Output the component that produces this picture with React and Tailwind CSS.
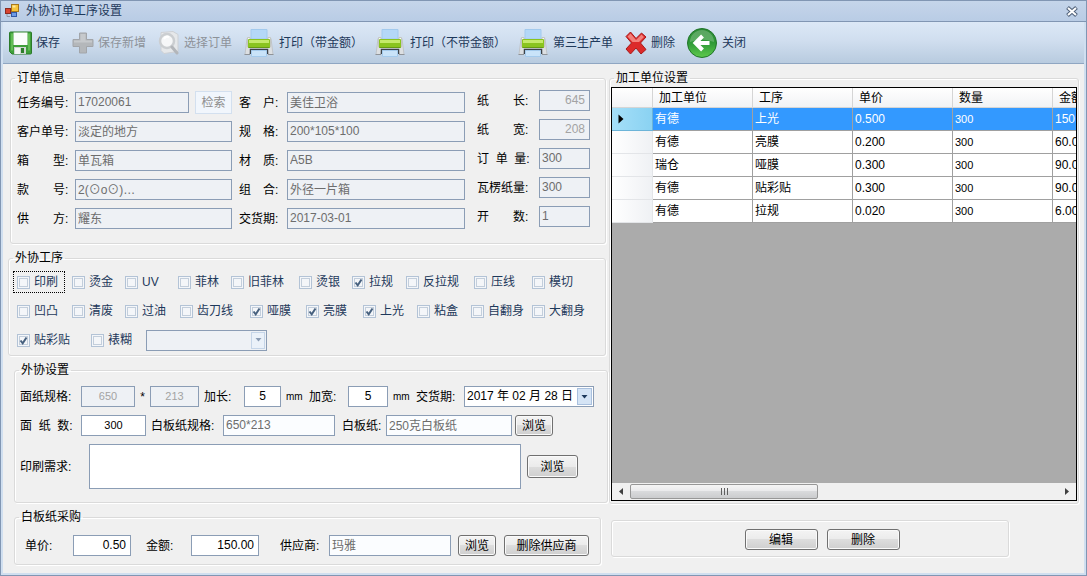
import clsx from 'clsx'

const orderFields = [
  { id: 'taskNo', label: '任务编号:', value: '17020061', search: true },
  { id: 'customerNo', label: '客户单号:', value: '淡定的地方' },
  { id: 'boxType', label: '箱　　型:', value: '单瓦箱' },
  { id: 'styleNo', label: '款　　号:', value: '2(⊙o⊙)…' },
  { id: 'supplySide', label: '供　　方:', value: '耀东' },
]

const specFields = [
  { id: 'customer', label: '客　户:', value: '美佳卫浴' },
  { id: 'spec', label: '规　格:', value: '200*105*100' },
  { id: 'material', label: '材　质:', value: 'A5B' },
  { id: 'combo', label: '组　合:', value: '外径一片箱' },
  { id: 'delivery', label: '交货期:', value: '2017-03-01' },
]

const paperFields = [
  { id: 'paperLength', label: '纸　　长:', value: '645', faded: true },
  { id: 'paperWidth', label: '纸　　宽:', value: '208', faded: true },
  { id: 'orderQty', label: '订  单  量:', value: '300' },
  { id: 'corrugatedQty', label: '瓦楞纸量:', value: '300' },
  { id: 'openCount', label: '开　　数:', value: '1' },
]

const processRow1 = [
  { name: '印刷', focused: true },
  { name: '烫金' },
  { name: 'UV' },
  { name: '菲林' },
  { name: '旧菲林' },
  { name: '烫银' },
  { name: '拉规', checked: true },
  { name: '反拉规' },
  { name: '压线' },
  { name: '模切' },
]

const processRow2 = [
  { name: '凹凸' },
  { name: '清废' },
  { name: '过油' },
  { name: '齿刀线' },
  { name: '哑膜', checked: true },
  { name: '亮膜', checked: true },
  { name: '上光', checked: true },
  { name: '粘盒' },
  { name: '自翻身' },
  { name: '大翻身' },
]

const units = [
  { unit: '有德', process: '上光', price: '0.500', qty: '300', amount: '150.00' },
  { unit: '有德', process: '亮膜', price: '0.200', qty: '300', amount: '60.00' },
  { unit: '瑞仓', process: '哑膜', price: '0.300', qty: '300', amount: '90.00' },
  { unit: '有德', process: '贴彩贴', price: '0.300', qty: '300', amount: '90.00' },
  { unit: '有德', process: '拉规', price: '0.020', qty: '300', amount: '6.00' },
]

function AppIcon() {
  return (
    <svg width="14" height="14" viewBox="0 0 14 14">
      <rect x="6.5" y="0.5" width="7" height="7" fill="#f7c53b" stroke="#a8781c" />
      <rect x="7.5" y="1.5" width="3" height="2" fill="#ffe9a0" />
      <rect x="0.5" y="4.5" width="5" height="5" fill="#d8432f" stroke="#8c2b20" />
      <rect x="6.5" y="8.5" width="5" height="4" fill="#6d9be6" stroke="#3258a5" />
      <path d="M2 10v2.500h3" fill="none" stroke="#8b95a5" />
    </svg>
  )
}

function SaveIcon() {
  return (
    <svg width="23" height="24" viewBox="0 0 23 24">
      <path d="M1.500 1h20a1 1 0 0 1 1 1v20a1 1 0 0 1-1 1H3l-2.500-2.500V2a1 1 0 0 1 1-1z" fill="#3f9f3a" stroke="#2b7a2a" />
      <path d="M2 2.500h2v17H2zM19 2.500h2v17h-2z" fill="#63bd55" />
      <rect x="4.500" y="1.500" width="14" height="12.500" fill="#fbfdfb" />
      <path d="M5 16h12v7H5z" fill="#cfd6d2" />
      <path d="M12 17h3v5h-3z" fill="#2d7d2b" />
      <path d="M6 17h5v6H6z" fill="#f4f6f5" />
    </svg>
  )
}

function PlusIcon() {
  return (
    <svg width="22" height="22" viewBox="0 0 22 22">
      <path d="M7.500 1h7v6.500H21v7h-6.500V21h-7v-6.500H1v-7h6.500z" fill="#b4b7ba" stroke="#a2a5a9" />
      <path d="M8.500 2h5v6.500H20v2H2v-2h6.500z" fill="#c6c9cc" />
    </svg>
  )
}

function SearchDocIcon() {
  return (
    <svg width="22" height="24" viewBox="0 0 22 24">
      <path d="M3 1.500l12-1 5 3v17l-14 2-3-3z" fill="#e6e8ea" stroke="#cdd0d4" />
      <circle cx="9" cy="10" r="7" fill="#f7f8f9" fillOpacity="0.900" stroke="#cbced1" strokeWidth="2.500" />
      <path d="M6 8a4 4 0 0 1 5-2" fill="none" stroke="#fff" strokeWidth="2" />
      <path d="M14 16l5 6" stroke="#b3b6ba" strokeWidth="3" strokeLinecap="round" />
    </svg>
  )
}

function PrinterIcon() {
  return (
    <svg width="30" height="28" viewBox="0 0 30 28">
      <path d="M3 9.500L1 25.500h4.500l2-5h15l2 5H29l-2-16z" fill="#dcdfe2" stroke="#c0c4c8" />
      <path d="M0.500 25.500H6M24 25.500h5.500" stroke="#8f9398" />
      <path d="M7 0.500h16V10H7z" fill="#b4d8f8" stroke="#a2caee" />
      <path d="M3.500 8.500H6v3h18v-3h2.500V18h-23z" fill="#f7f8f8" stroke="#c3c7c2" />
      <rect x="4" y="10" width="22" height="9" rx="1" fill="#8ac41f" />
      <path d="M5 12.500h20" stroke="#c5ea6b" strokeWidth="3" />
      <path d="M4.500 18.500h21" stroke="#669b15" />
      <path d="M6.500 25v-4.500h17V25" fill="none" stroke="#3c4248" strokeWidth="1.500" />
      <path d="M7.500 21.500h15v6h-15z" fill="#c9e3f9" stroke="#a4caec" />
    </svg>
  )
}

function DeleteIcon() {
  return (
    <svg width="22" height="24" viewBox="0 0 22 24">
      <path d="M5.500 1L11 7.500 16.500 2l4.500 4-5.500 6 5.500 6.500-5 4.500-5-6-5.500 6L1 18l5.500-6L1 5.500z" fill="#dc2a2a" stroke="#a81b1b" strokeLinejoin="round" />
      <path d="M5.500 2.500L11 9l5.500-5.500L19 6l-5 5H7.500L2.500 5.500z" fill="#f3817b" />
    </svg>
  )
}

function BackIcon() {
  return (
    <svg width="30" height="30" viewBox="0 0 30 30">
      <defs>
        <linearGradient id="backFill" x1="0" y1="0" x2="0" y2="1">
          <stop offset="0" stopColor="#2c8a35" />
          <stop offset="0.500" stopColor="#2f9a37" />
          <stop offset="1" stopColor="#5fca4d" />
        </linearGradient>
      </defs>
      <circle cx="15" cy="15" r="14.500" fill="url(#backFill)" stroke="#22762b" />
      <path d="M3 14a12 12 0 0 1 24 0q-12-5-24 0z" fill="#fff" fillOpacity="0.220" />
      <path d="M15.500 8L8.500 15l7 7M9 15h13.500" fill="none" stroke="#fff" strokeWidth="4" />
    </svg>
  )
}

const tools = [
  { label: '保存', icon: SaveIcon },
  { label: '保存新增', icon: PlusIcon, disabled: true },
  { label: '选择订单', icon: SearchDocIcon, disabled: true },
  { label: '打印（带金额）', icon: PrinterIcon },
  { label: '打印（不带金额）', icon: PrinterIcon },
  { label: '第三生产单', icon: PrinterIcon },
  { label: '删除', icon: DeleteIcon },
  { label: '关闭', icon: BackIcon },
]

function GroupBox({ title, className, children }) {
  return (
    <fieldset className={clsx('min-w-0 rounded-[3px] border border-[#dadada] shadow-[1px_1px_0_#fff,inset_1px_1px_0_#fff]', className)}>
      {title && <legend className="ml-1 px-[2px] leading-4">{title}</legend>}
      {children}
    </fieldset>
  )
}

function TextBox({ className, ...props }) {
  return (
    <input
      type="text"
      className={clsx('h-[21px] min-w-0 border border-[#8b9db5] px-[2px] pb-[2px] outline-none', className)}
      {...props}
    />
  )
}

function Button({ className, children }) {
  return (
    <button
      type="button"
      className={clsx(
        'shrink-0 rounded-[3px] border border-[#707070] bg-[linear-gradient(#f4f4f4,#ebebeb_50%,#dddddd_50%,#cfcfcf)] shadow-[inset_0_0_0_1px_#fafafa] leading-4 text-black',
        className
      )}
    >
      {children}
    </button>
  )
}

function FieldColumn({ fields, labelClass, inputClass }) {
  return (
    <div className="flex flex-col gap-2">
      {fields.map((f) => (
        <div key={f.id} className="flex h-[21px] items-center">
          <label htmlFor={f.id} className={clsx('shrink-0 whitespace-pre', labelClass)}>{f.label}</label>
          <TextBox
            id={f.id}
            defaultValue={f.value}
            readOnly
            className={clsx(
              'bg-[#eef1f5]',
              f.search ? 'w-[114px]' : inputClass,
              f.faded ? 'pr-1 text-right text-[#a3a3a3]' : 'text-[#6d6d6d]'
            )}
          />
          {f.search && (
            <button type="button" disabled className="ml-[6px] h-[23px] w-[37px] shrink-0 border border-[#d3e0ef] bg-[#f1f6fc] text-[#8d8d8d]">
              检索
            </button>
          )}
        </div>
      ))}
    </div>
  )
}

function Check({ name, checked, focused }) {
  return (
    <label
      className={clsx(
        'flex h-[22px] w-[52px] items-center gap-1 pl-1 whitespace-nowrap text-[#1e395b]',
        focused && 'outline-1 -outline-offset-1 outline-dotted outline-black'
      )}
    >
      <span className="relative h-[13px] w-[13px] shrink-0">
        <input
          type="checkbox"
          defaultChecked={checked}
          className="peer block h-[13px] w-[13px] appearance-none border border-[#b3c3d6] bg-[#f4f6f9] shadow-[inset_0_0_0_1px_#f4f6f9,inset_0_0_0_2px_#c3cedb]"
        />
        <svg className="pointer-events-none absolute inset-0 hidden peer-checked:block" width="13" height="13" viewBox="0 0 13 13">
          <path d="M3.500 6.500l2.200 2.800L9.500 3.500" fill="none" stroke="#47617f" strokeWidth="2" />
        </svg>
      </span>
      {name}
    </label>
  )
}

function DownArrow({ className }) {
  return (
    <svg className={className} width="7" height="4" viewBox="0 0 7 4">
      <path d="M0.500 0h6l-3 3.500z" fill="currentColor" />
    </svg>
  )
}

function UnitGrid() {
  const cell = 'h-[23px] border-r border-b border-[#a0a0a0] pl-[2px] pb-[1px]'
  return (
    <div className="mx-[1px] mb-[2px] mt-[1px] flex flex-1 flex-col border border-black bg-[#ababab]">
      <div className="flex-1 overflow-hidden">
        <table className="w-[541px] table-fixed border-separate border-spacing-0 bg-white text-left">
          <colgroup>
            <col className="w-[41px]" />
            <col className="w-[100px]" />
            <col className="w-[100px]" />
            <col className="w-[100px]" />
            <col className="w-[100px]" />
            <col className="w-[100px]" />
          </colgroup>
          <thead>
            <tr className="bg-[linear-gradient(#ffffff,#f1f2f4)]">
              <th className="h-[20px] border-r border-b border-[#d5d5d5]" />
              {['加工单位', '工序', '单价', '数量', '金额'].map((h) => (
                <th key={h} className="h-[20px] border-r border-b border-[#d5d5d5] pl-[6px] font-normal leading-4">{h}</th>
              ))}
            </tr>
          </thead>
          <tbody>
            {units.map((u, i) => (
              <tr key={i} className={clsx('leading-4', i === 0 && 'bg-[#3399ff] text-white')}>
                <td className={clsx('h-[23px] border-r border-b', i === 0 ? 'border-[#6cb4d8] bg-[linear-gradient(90deg,#a5dff8,#8ad2f2)] pl-[6px]' : 'border-[#e3e5e8] bg-[linear-gradient(90deg,#ffffff,#eff1f4)]')}>
                  {i === 0 && (
                    <svg width="6" height="10" viewBox="0 0 6 10">
                      <path d="M0.500 0.500L5.500 5l-5 4.500z" fill="#000" />
                    </svg>
                  )}
                </td>
                <td className={cell}>{u.unit}</td>
                <td className={cell}>{u.process}</td>
                <td className={cell}>{u.price}</td>
                <td className={clsx(cell, 'text-[11px]')}>{u.qty}</td>
                <td className={cell}>{u.amount}</td>
              </tr>
            ))}
          </tbody>
        </table>
      </div>
      <div className="flex h-[17px] items-center bg-[#f0f0f0]">
        <button type="button" aria-label="向左滚动" className="flex w-[18px] justify-center">
          <svg width="4" height="7" viewBox="0 0 4 7"><path d="M4 0v7L0 3.500z" fill="#404040" /></svg>
        </button>
        <div className="flex-1">
          <div className="flex h-[15px] w-[44%] items-center justify-center gap-[2px] rounded-[2px] border border-[#979797] bg-[linear-gradient(#f5f5f5,#e9e9eb_50%,#d9dadc_50%,#cbccce)]">
            <span className="h-[7px] w-px bg-[#606060]" />
            <span className="h-[7px] w-px bg-[#606060]" />
            <span className="h-[7px] w-px bg-[#606060]" />
          </div>
        </div>
        <button type="button" aria-label="向右滚动" className="flex w-[18px] justify-center">
          <svg width="4" height="7" viewBox="0 0 4 7"><path d="M0 0v7l4-3.500z" fill="#404040" /></svg>
        </button>
      </div>
    </div>
  )
}

export default function App() {
  return (
    <div className="flex min-h-screen flex-col border-r border-b border-l border-[#8196b3] bg-[#f0f0f0] font-['Liberation_Sans','Noto_Sans_CJK_SC',sans-serif] text-[12px] leading-4 text-black">
      <header className="flex h-[22px] items-center border-t border-b border-[#8196b3] bg-[linear-gradient(#c5d5ea,#b9cce5)] pl-1 pr-2">
        <AppIcon />
        <h1 className="ml-[7px] flex-1 text-[#1e395b]">外协订单工序设置</h1>
        <button type="button" aria-label="关闭窗口">
          <svg width="12" height="11" viewBox="0 0 12 11">
            <path d="M1.500 1.500l9 8M10.500 1.500l-9 8" stroke="#4f6078" strokeWidth="4" />
            <path d="M2 2l8 7M10 2l-8 7" stroke="#fff" strokeWidth="2" />
          </svg>
        </button>
      </header>

      <div className="flex flex-1 flex-col border-r-2 border-b-2 border-l-2 border-[#d0dff0]">
        <nav className="flex h-[42px] items-center gap-[12px] border-b border-[#8fa6c2] bg-[linear-gradient(#dce8f6,#d0deef_45%,#b8cbdf)] pl-[6px]">
          {tools.map((t) => (
            <button
              key={t.label}
              type="button"
              disabled={t.disabled}
              className={clsx(
                'flex shrink-0 items-center whitespace-nowrap',
                t.icon === PrinterIcon || t.icon === BackIcon ? 'gap-[5px]' : 'gap-1',
                t.disabled ? 'text-[#8d9299]' : 'text-[#1e395b]'
              )}
            >
              <t.icon />
              {t.label}
            </button>
          ))}
        </nav>

        <main className="flex flex-1 pt-[6px] pb-2 pl-[5px] pr-[5px]">
          <div className="flex w-[601px] shrink-0 flex-col gap-[6px] pr-[1px]">
            <GroupBox title="订单信息" className="ml-[2px] mr-[2px]">
              <div className="flex pt-[6px] pb-[14px] pl-[6px]">
                <FieldColumn fields={orderFields} labelClass="w-[58px]" inputClass="w-[157px]" />
                <div className="pl-[7px]">
                  <FieldColumn fields={specFields} labelClass="w-[48px]" inputClass="w-[178px]" />
                </div>
                <div className="-mt-[2px] pl-[12px]">
                  <FieldColumn fields={paperFields} labelClass="w-[62px]" inputClass="w-[51px]" />
                </div>
              </div>
            </GroupBox>

            <GroupBox title="外协工序" className="mr-[2px]">
              <div className="flex flex-col gap-[7px] pt-[5px] pb-1 pl-1">
                <div className="grid grid-cols-[55px_53px_53px_53px_68px_53px_54px_68px_58px_52px]">
                  {processRow1.map((p) => <Check key={p.name} {...p} />)}
                </div>
                <div className="grid grid-cols-[55px_53px_55px_70px_56px_57px_54px_54px_61px_52px]">
                  {processRow2.map((p) => <Check key={p.name} {...p} />)}
                </div>
                <div className="grid grid-cols-[74px_59px_121px] items-center">
                  <Check name="贴彩贴" checked />
                  <Check name="裱糊" />
                  <div className="relative">
                    <select aria-label="裱糊方式" disabled className="block h-[21px] w-full appearance-none border border-[#8b9db5] bg-[#eef1f5]">
                      <option></option>
                    </select>
                    <span className="pointer-events-none absolute top-[2px] right-[2px] flex h-[17px] w-[14px] items-center justify-center border border-[#c5d5e8] bg-[#eaf1f9]">
                      <DownArrow className="text-[#8b9db5]" />
                    </span>
                  </div>
                </div>
              </div>
            </GroupBox>

            <GroupBox title="外协设置" className="ml-[6px]">
              <div className="flex flex-col gap-2 pt-2 pb-[13px] pl-[5px]">
                <div className="flex items-center">
                  <label htmlFor="faceLength" className="w-[61px]">面纸规格:</label>
                  <TextBox id="faceLength" defaultValue="650" readOnly className="w-[54px] bg-[#eef1f5] text-center text-[11px] text-[#a3a3a3]" />
                  <span className="w-[15px] text-center">*</span>
                  <TextBox aria-label="面纸宽" defaultValue="213" readOnly className="w-[49px] bg-[#eef1f5] text-center text-[11px] text-[#a3a3a3]" />
                  <label htmlFor="addLength" className="w-[45px] pl-[5px]">加长:</label>
                  <TextBox id="addLength" defaultValue="5" className="w-[37px] bg-white text-center" />
                  <span className="w-[28px] pl-[5px] text-[10px]">mm</span>
                  <label htmlFor="addWidth" className="w-[39px]">加宽:</label>
                  <TextBox id="addWidth" defaultValue="5" className="w-[40px] bg-white text-center" />
                  <span className="w-[28px] pl-[5px] text-[10px]">mm</span>
                  <label htmlFor="dueDate" className="w-[48px]">交货期:</label>
                  <div className="flex h-[21px] w-[130px] border border-[#8b9db5] bg-white">
                    <input id="dueDate" type="text" defaultValue="2017 年 02 月 28 日" className="min-w-0 flex-1 pb-[2px] pl-[2px] outline-none" />
                    <button type="button" aria-label="选择日期" className="m-[1px] flex w-[15px] items-center justify-center border border-[#a9c0de] bg-[#d5e4f5]">
                      <DownArrow className="text-[#1e395b]" />
                    </button>
                  </div>
                </div>
                <div className="flex items-center">
                  <label htmlFor="faceQty" className="w-[61px] whitespace-pre">面  纸  数:</label>
                  <TextBox id="faceQty" defaultValue="300" className="w-[65px] bg-white text-center text-[11px]" />
                  <label htmlFor="boardSpec" className="w-[77px] pl-[5px]">白板纸规格:</label>
                  <TextBox id="boardSpec" defaultValue="650*213" readOnly className="w-[112px] bg-[#fbfdff] text-[#6d6d6d]" />
                  <label htmlFor="board" className="w-[51px] pl-[7px]">白板纸:</label>
                  <TextBox id="board" defaultValue="250克白板纸" readOnly className="w-[126px] bg-[#fbfdff] text-[#6d6d6d]" />
                  <Button className="ml-[3px] h-[21px] w-[38px]">浏览</Button>
                </div>
                <div className="flex items-center">
                  <label htmlFor="printNeeds" className="w-[69px]">印刷需求:</label>
                  <textarea id="printNeeds" className="block h-[45px] w-[432px] resize-none border border-[#8b9db5] bg-white outline-none" />
                  <Button className="ml-[6px] h-[23px] w-[51px]">浏览</Button>
                </div>
              </div>
            </GroupBox>

            <GroupBox title="白板纸采购" className="ml-[6px] mr-[7px]">
              <div className="flex items-center pt-[10px] pb-2 pl-[10px]">
                <label htmlFor="unitPrice" className="w-[48px]">单价:</label>
                <TextBox id="unitPrice" defaultValue="0.50" className="w-[58px] bg-white pr-1 text-right" />
                <label htmlFor="amount" className="w-[60px] pl-[15px]">金额:</label>
                <TextBox id="amount" defaultValue="150.00" className="w-[68px] bg-white pr-1 text-right" />
                <label htmlFor="supplier" className="w-[70px] pl-[21px]">供应商:</label>
                <TextBox id="supplier" defaultValue="玛雅" readOnly className="w-[122px] bg-[#fbfdff] text-[#6d6d6d]" />
                <Button className="ml-[7px] h-[21px] w-[38px]">浏览</Button>
                <Button className="ml-2 h-[21px] w-[85px]">删除供应商</Button>
              </div>
            </GroupBox>
          </div>

          <div className="flex min-w-0 flex-1 flex-col gap-4 pb-2">
            <GroupBox title="加工单位设置" className="flex flex-1 flex-col">
              <UnitGrid />
            </GroupBox>
            <GroupBox className="ml-[2px] mr-[70px]">
              <div className="flex justify-center gap-[9px] pt-2 pb-[6px] pl-6">
                <Button className="h-[21px] w-[73px]">编辑</Button>
                <Button className="h-[21px] w-[73px]">删除</Button>
              </div>
            </GroupBox>
          </div>
        </main>
      </div>
    </div>
  )
}
